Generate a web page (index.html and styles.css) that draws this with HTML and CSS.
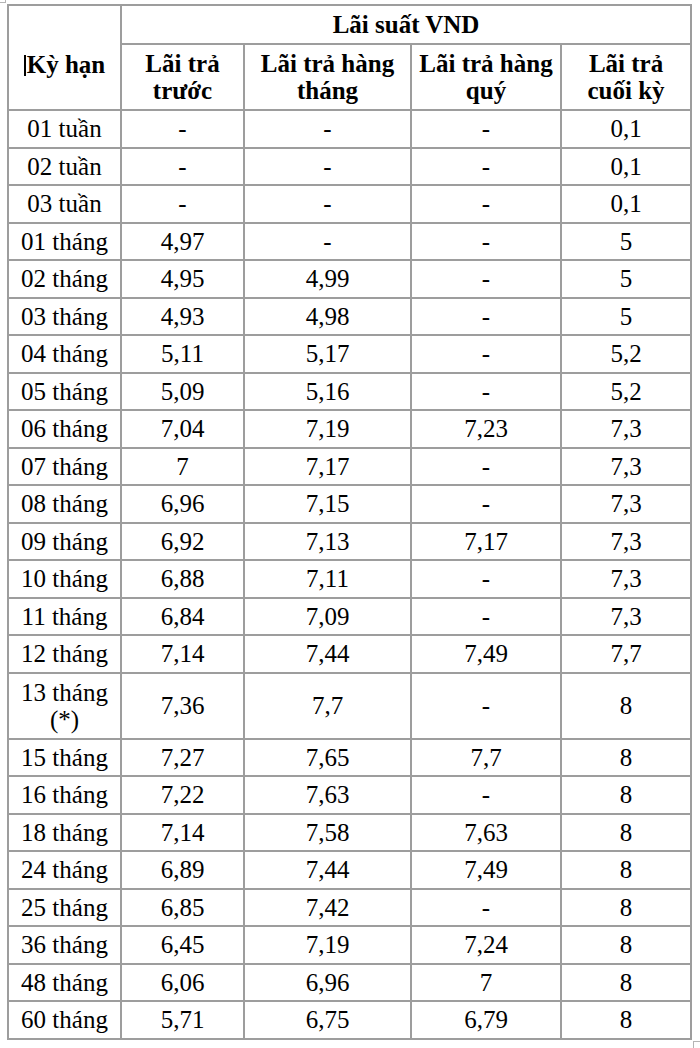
FILE: index.html
```html
<!DOCTYPE html>
<html lang="vi">
<head>
<meta charset="utf-8">
<title>Lãi suất VND</title>
<link rel="stylesheet" href="styles.css">
</head>
<body>
<div class="page">
  <span class="handle handle-tl"></span>
  <table class="rates">
    <colgroup>
      <col class="c1"><col class="c2"><col class="c3"><col class="c4"><col class="c5">
    </colgroup>
    <thead>
      <tr class="h1">
        <th rowspan="2" class="term-head"><span class="caret"></span>Kỳ hạn</th>
        <th colspan="4">Lãi suất VND</th>
      </tr>
      <tr class="h2">
        <th>Lãi trả<br>trước</th>
        <th>Lãi trả hàng<br>tháng</th>
        <th>Lãi trả hàng<br>quý</th>
        <th>Lãi trả<br>cuối kỳ</th>
      </tr>
    </thead>
    <tbody>
      <tr><td>01 tuần</td><td>-</td><td>-</td><td>-</td><td>0,1</td></tr>
      <tr><td>02 tuần</td><td>-</td><td>-</td><td>-</td><td>0,1</td></tr>
      <tr><td>03 tuần</td><td>-</td><td>-</td><td>-</td><td>0,1</td></tr>
      <tr><td>01 tháng</td><td>4,97</td><td>-</td><td>-</td><td>5</td></tr>
      <tr><td>02 tháng</td><td>4,95</td><td>4,99</td><td>-</td><td>5</td></tr>
      <tr><td>03 tháng</td><td>4,93</td><td>4,98</td><td>-</td><td>5</td></tr>
      <tr><td>04 tháng</td><td>5,11</td><td>5,17</td><td>-</td><td>5,2</td></tr>
      <tr><td>05 tháng</td><td>5,09</td><td>5,16</td><td>-</td><td>5,2</td></tr>
      <tr><td>06 tháng</td><td>7,04</td><td>7,19</td><td>7,23</td><td>7,3</td></tr>
      <tr><td>07 tháng</td><td>7</td><td>7,17</td><td>-</td><td>7,3</td></tr>
      <tr><td>08 tháng</td><td>6,96</td><td>7,15</td><td>-</td><td>7,3</td></tr>
      <tr><td>09 tháng</td><td>6,92</td><td>7,13</td><td>7,17</td><td>7,3</td></tr>
      <tr><td>10 tháng</td><td>6,88</td><td>7,11</td><td>-</td><td>7,3</td></tr>
      <tr><td>11 tháng</td><td>6,84</td><td>7,09</td><td>-</td><td>7,3</td></tr>
      <tr><td>12 tháng</td><td>7,14</td><td>7,44</td><td>7,49</td><td>7,7</td></tr>
      <tr class="tall"><td>13 tháng<br>(*)</td><td>7,36</td><td>7,7</td><td>-</td><td>8</td></tr>
      <tr><td>15 tháng</td><td>7,27</td><td>7,65</td><td>7,7</td><td>8</td></tr>
      <tr><td>16 tháng</td><td>7,22</td><td>7,63</td><td>-</td><td>8</td></tr>
      <tr><td>18 tháng</td><td>7,14</td><td>7,58</td><td>7,63</td><td>8</td></tr>
      <tr><td>24 tháng</td><td>6,89</td><td>7,44</td><td>7,49</td><td>8</td></tr>
      <tr><td>25 tháng</td><td>6,85</td><td>7,42</td><td>-</td><td>8</td></tr>
      <tr><td>36 tháng</td><td>6,45</td><td>7,19</td><td>7,24</td><td>8</td></tr>
      <tr><td>48 tháng</td><td>6,06</td><td>6,96</td><td>7</td><td>8</td></tr>
      <tr><td>60 tháng</td><td>5,71</td><td>6,75</td><td>6,79</td><td>8</td></tr>
    </tbody>
  </table>
  <span class="handle handle-br"></span>
</div>
</body>
</html>
```

FILE: styles.css
```css
html, body {
  margin: 0;
  padding: 0;
  background: #ffffff;
}

.page {
  position: relative;
  width: 700px;
  height: 1048px;
  padding: 4px 0 0 7px;
  box-sizing: border-box;
  font-family: "Liberation Serif", "Times New Roman", serif;
  color: #000000;
}

.rates {
  border-collapse: collapse;
  table-layout: fixed;
  width: 685px;
  font-size: 25px;
  line-height: 27px;
}

.rates .c1 { width: 113px; }
.rates .c2 { width: 123px; }
.rates .c3 { width: 167px; }
.rates .c4 { width: 150px; }
.rates .c5 { width: 130px; }

.rates th,
.rates td {
  border: 2px solid #9d9d9d;
  padding: 0 2px;
  text-align: center;
  vertical-align: middle;
  font-weight: normal;
}

.rates th {
  font-weight: bold;
}

.rates tr { height: 37.5px; }
.rates tr.h1 { height: 39px; }
.rates tr.h2 { height: 66px; }
.rates tr.tall { height: 66px; }

.rates .term-head {
  vertical-align: top;
  padding-top: 45px;
}

.caret {
  display: inline-block;
  width: 2px;
  height: 21px;
  background: #000000;
  vertical-align: -3px;
  margin-right: 1px;
}

.handle {
  position: absolute;
  width: 8px;
  height: 8px;
  border: 1px solid #b5b5b5;
  box-sizing: border-box;
}

.handle-tl {
  left: -2px;
  top: -5px;
}

.handle-br {
  left: 693px;
  top: 1041px;
}
```
